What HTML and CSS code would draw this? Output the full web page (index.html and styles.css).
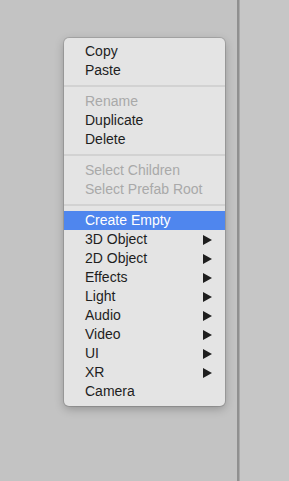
FILE: index.html
```html
<!DOCTYPE html>
<html lang="en">

<head>
  <meta charset="UTF-8">
  <meta name="viewport" content="width=device-width, initial-scale=1.0">
  <title>Hierarchy menu</title>
  <link rel="stylesheet" href="styles.css">
</head>

<body>
  <div class="window">
    <div class="pane left"></div>
    <div class="divider"></div>
    <div class="pane right"></div>
  </div>

  <div class="menu">
    <div class="item">Copy</div>
    <div class="item">Paste</div>
    <div class="sep"></div>
    <div class="item disabled">Rename</div>
    <div class="item">Duplicate</div>
    <div class="item">Delete</div>
    <div class="sep"></div>
    <div class="item disabled">Select Children</div>
    <div class="item disabled">Select Prefab Root</div>
    <div class="sep"></div>
    <div class="item active">Create Empty</div>
    <div class="item sub">3D Object</div>
    <div class="item sub">2D Object</div>
    <div class="item sub">Effects</div>
    <div class="item sub">Light</div>
    <div class="item sub">Audio</div>
    <div class="item sub">Video</div>
    <div class="item sub">UI</div>
    <div class="item sub">XR</div>
    <div class="item">Camera</div>
  </div>
</body>

</html>
```

FILE: styles.css
```css
body {
  margin: 0;
  height: 481px;
  overflow: hidden;
  font-family: "Liberation Sans", Arial, sans-serif;
  background-color: #c3c3c3;
}

.window {
  display: flex;
  height: 100%;
}

.pane.left {
  width: 237px;
  background-color: #c3c3c3;
}

.divider {
  width: 2px;
  background-color: #909090;
  border-right: 1px solid #a9a9a9;
}

.pane.right {
  flex: 1;
  background-color: #c6c6c6;
}

/* popup menu */

.menu {
  position: absolute;
  left: 64px;
  top: 38px;
  width: 161px;
  padding: 4px 0 5px;
  box-sizing: border-box;
  background-color: #e4e4e4;
  border-radius: 5px;
  box-shadow: 0 0 0 1px rgba(0, 0, 0, 0.12), 0 3px 10px rgba(0, 0, 0, 0.25);
}

.item {
  position: relative;
  height: 19px;
  line-height: 19px;
  padding-left: 21px;
  font-size: 14px;
  color: #1e1e1e;
}

.item.disabled {
  color: #a9a9a9;
}

.item.active {
  background-color: #4f86ee;
  color: #fff;
}

.item.sub::after {
  content: "";
  position: absolute;
  right: 13px;
  top: 5px;
  border-left: 9px solid #1e1e1e;
  border-top: 5px solid transparent;
  border-bottom: 5px solid transparent;
}

.sep {
  height: 2px;
  margin: 5px 0;
  background-color: #d2d2d2;
}
```
